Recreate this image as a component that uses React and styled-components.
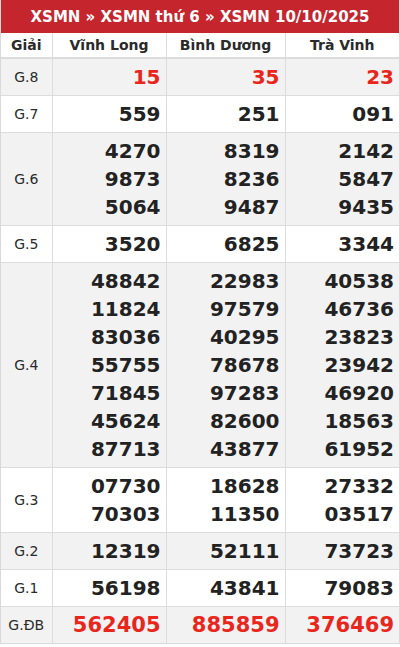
import styled, { createGlobalStyle } from 'styled-components';

const GlobalStyle = createGlobalStyle`
  body {
    margin: 0;
    background: #fff;
    font-family: "DejaVu Sans", "Liberation Sans", sans-serif;
  }
`;

const Wrapper = styled.div`
  width: 398px;
  border: 1px solid #d9d9d9;
  border-top: none;
`;

const TitleBar = styled.div`
  height: 33px;
  background: #c5252d;
  color: #fff;
  font-size: 15px;
  font-weight: bold;
  display: flex;
  align-items: center;
  justify-content: center;
`;

const Table = styled.table`
  width: 100%;
  border-collapse: collapse;
  table-layout: fixed;
`;

const HeadCell = styled.th`
  height: 24px;
  padding: 0;
  font-size: 14px;
  font-weight: bold;
  color: #2a2a2a;
  text-align: center;
  border-left: 1px solid #dcdcdc;
  border-bottom: 2px solid #dcdcdc;
  &:first-child { border-left: none; }
`;

const Row = styled.tr`
  background: ${p => (p.$shade ? '#f2f2f2' : '#fff')};
  border-bottom: 1px solid #dcdcdc;
  &:last-child { border-bottom: none; }
`;

const PrizeCell = styled.td`
  padding: 0;
  font-size: 14px;
  color: #2a2a2a;
  text-align: center;
`;

const NumberCell = styled.td`
  padding: 4px 5px;
  border-left: 1px solid #dcdcdc;
  text-align: right;
  vertical-align: middle;
`;

const Num = styled.div`
  font-size: ${p => (p.$big ? '21px' : '20px')};
  line-height: 28px;
  font-weight: bold;
  color: ${p => (p.$red ? '#e8261c' : '#222')};
`;

const provinces = ['Vĩnh Long', 'Bình Dương', 'Trà Vinh'];

const results = [
  { prize: 'G.8', red: true, cols: [['15'], ['35'], ['23']] },
  { prize: 'G.7', cols: [['559'], ['251'], ['091']] },
  { prize: 'G.6', cols: [['4270', '9873', '5064'], ['8319', '8236', '9487'], ['2142', '5847', '9435']] },
  { prize: 'G.5', cols: [['3520'], ['6825'], ['3344']] },
  {
    prize: 'G.4',
    cols: [
      ['48842', '11824', '83036', '55755', '71845', '45624', '87713'],
      ['22983', '97579', '40295', '78678', '97283', '82600', '43877'],
      ['40538', '46736', '23823', '23942', '46920', '18563', '61952'],
    ],
  },
  { prize: 'G.3', cols: [['07730', '70303'], ['18628', '11350'], ['27332', '03517']] },
  { prize: 'G.2', cols: [['12319'], ['52111'], ['73723']] },
  { prize: 'G.1', cols: [['56198'], ['43841'], ['79083']] },
  { prize: 'G.ĐB', red: true, big: true, cols: [['562405'], ['885859'], ['376469']] },
];

const App = () => {
  return (
    <>
      <GlobalStyle />
      <Wrapper>
        <TitleBar>XSMN » XSMN thứ 6 » XSMN 10/10/2025</TitleBar>
        <Table>
          <colgroup>
            <col style={{ width: 51 }} />
            <col style={{ width: 114 }} />
            <col style={{ width: 119 }} />
            <col />
          </colgroup>
          <thead>
            <tr>
              <HeadCell>Giải</HeadCell>
              {provinces.map(p => (
                <HeadCell key={p}>{p}</HeadCell>
              ))}
            </tr>
          </thead>
          <tbody>
            {results.map((r, i) => (
              <Row key={r.prize} $shade={i % 2 === 0}>
                <PrizeCell>{r.prize}</PrizeCell>
                {r.cols.map((nums, j) => (
                  <NumberCell key={j}>
                    {nums.map((n, k) => (
                      <Num key={k} $red={r.red} $big={r.big}>{n}</Num>
                    ))}
                  </NumberCell>
                ))}
              </Row>
            ))}
          </tbody>
        </Table>
      </Wrapper>
    </>
  );
};

export default App;
